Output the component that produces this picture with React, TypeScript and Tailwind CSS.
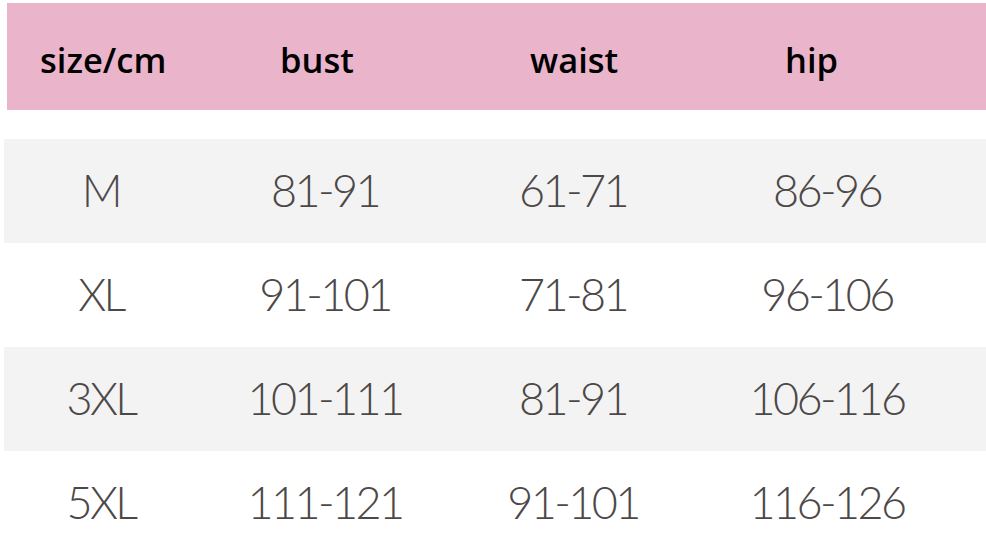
import React from 'react';

const rows = [
  { size: 'M', bust: '81-91', waist: '61-71', hip: '86-96' },
  { size: 'XL', bust: '91-101', waist: '71-81', hip: '96-106' },
  { size: '3XL', bust: '101-111', waist: '81-91', hip: '106-116' },
  { size: '5XL', bust: '111-121', waist: '91-101', hip: '116-126' },
];

export default function App() {
  return (
    <div className="w-[986px] h-[541px] overflow-hidden bg-white">
      {/* header band */}
      <div className="ml-[7px] mt-[3px] h-[107px] bg-[#eab4cb] grid grid-cols-[240px_250px_255px_1fr] items-center pl-[33px] pt-[6px] font-['Open_Sans',sans-serif] font-semibold text-[34.5px] text-black">
        <div>size/cm</div>
        <div>bust</div>
        <div>waist</div>
        <div>hip</div>
      </div>

      <div className="h-[29px]" />

      {rows.map((r, i) => (
        <div
          key={r.size}
          className={`ml-[4px] h-[104px] grid grid-cols-[194px_254px_242px_266px] items-center text-center font-['Lato',sans-serif] font-light text-[45px] tracking-[-2.6px] text-[#4d4848] ${i % 2 === 0 ? 'bg-[#f3f3f3]' : 'bg-white'}`}
        >
          <div>{r.size}</div>
          <div>{r.bust}</div>
          <div>{r.waist}</div>
          <div>{r.hip}</div>
        </div>
      ))}
    </div>
  );
}
